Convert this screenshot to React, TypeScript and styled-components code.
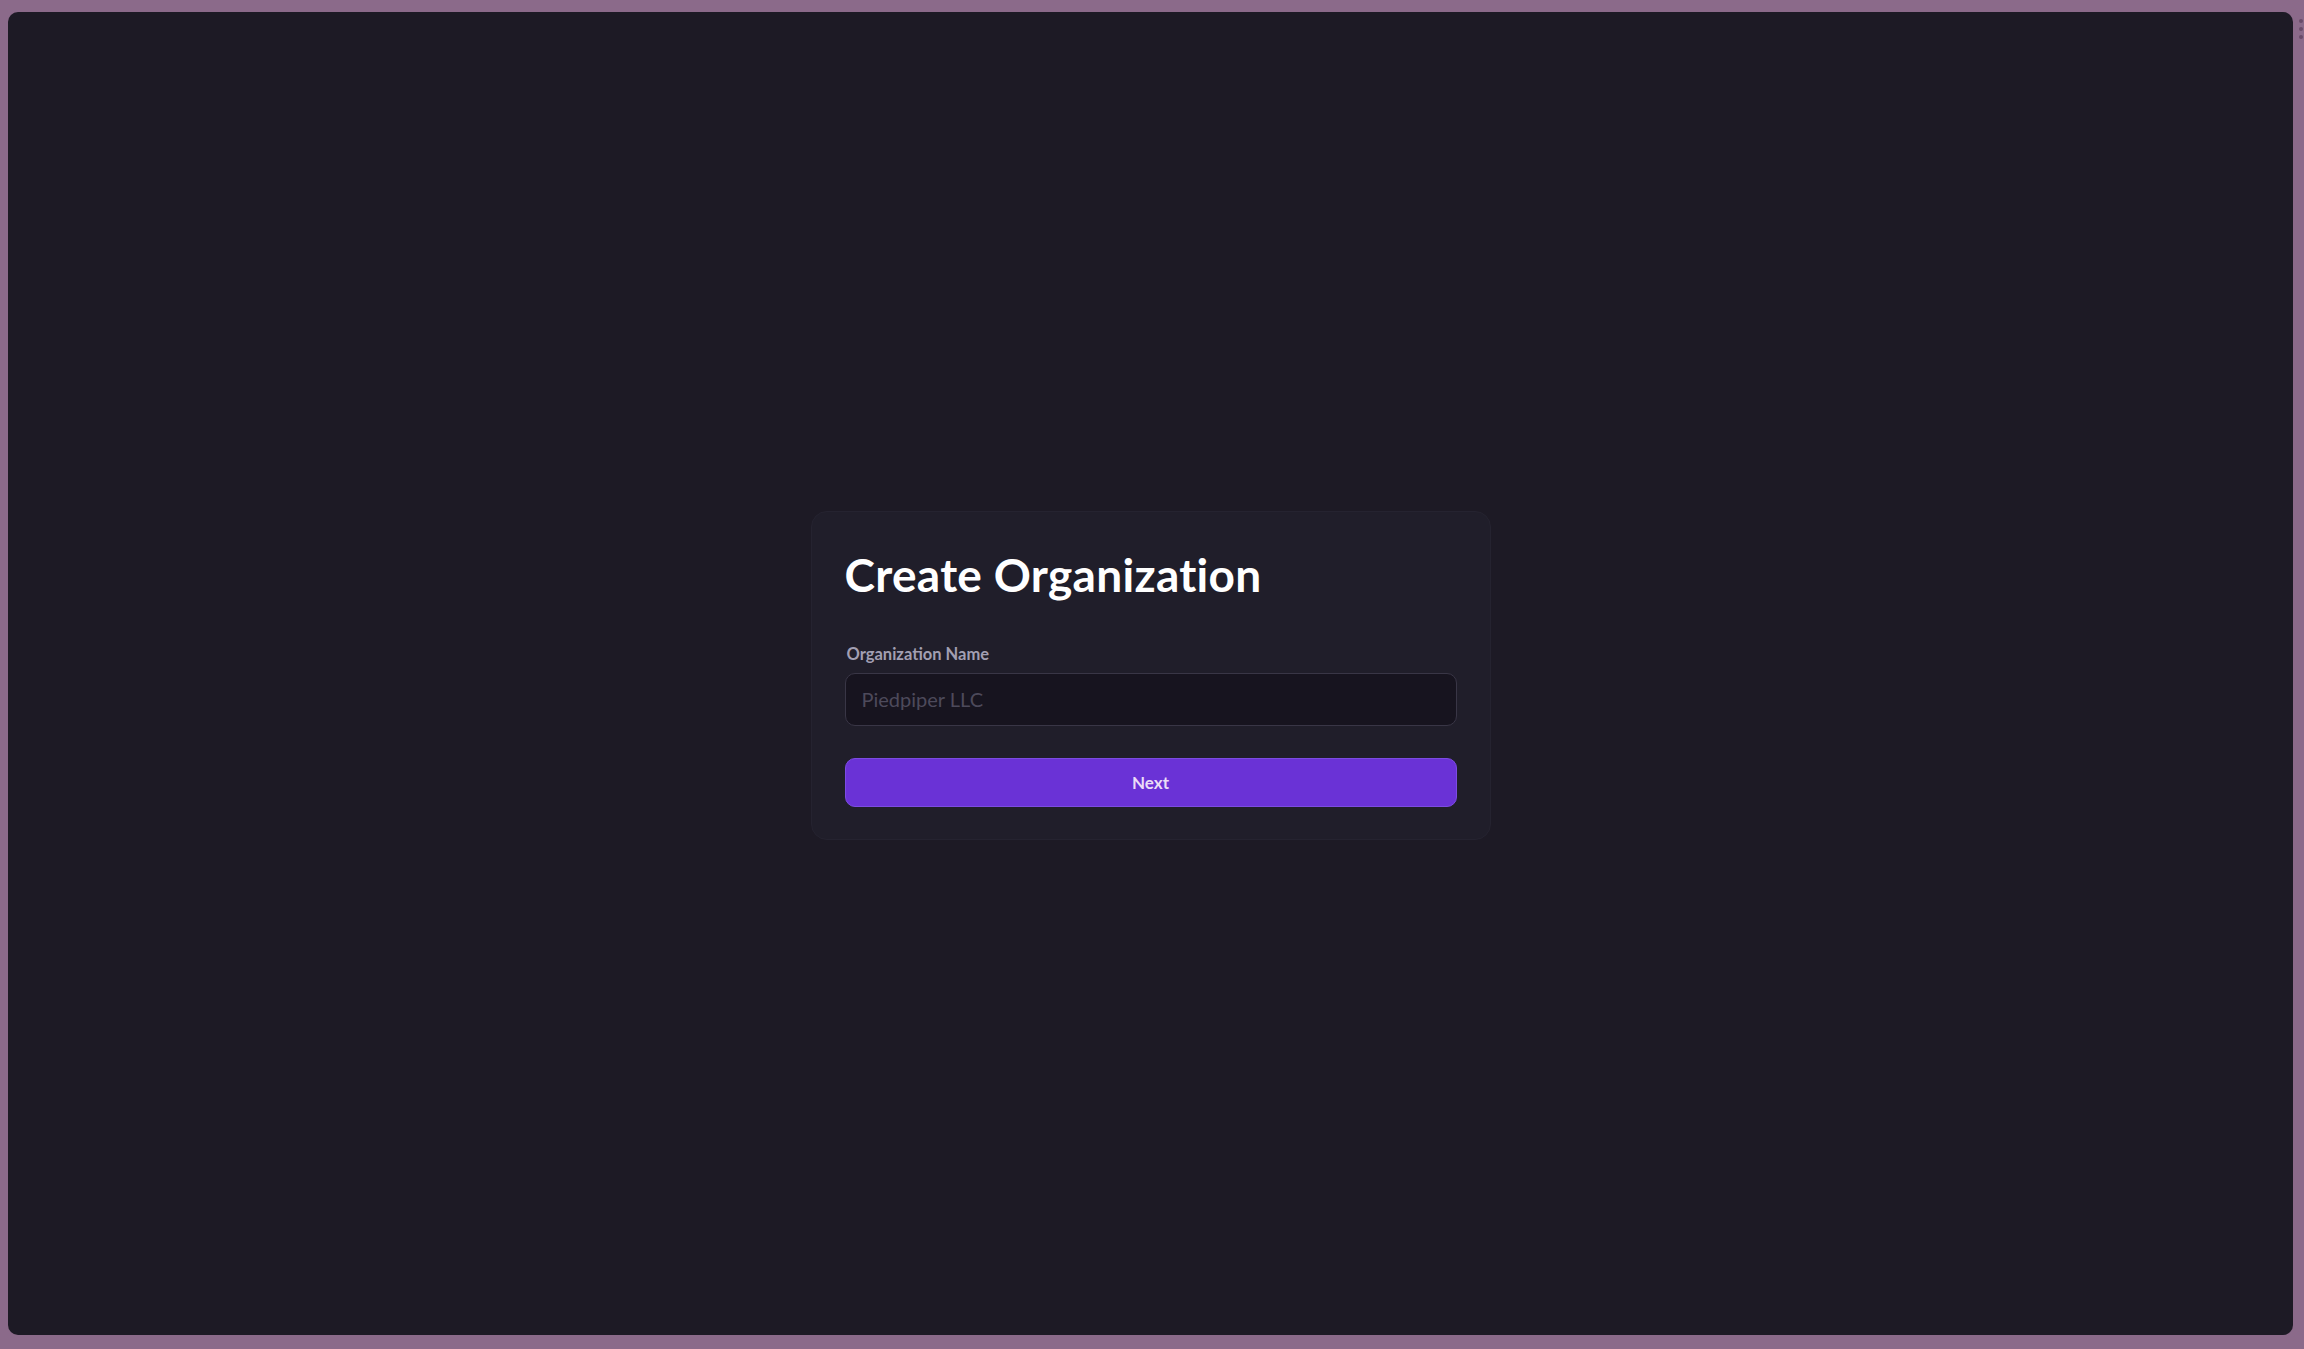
import styled, { createGlobalStyle } from "styled-components";

const GlobalStyle = createGlobalStyle`
  html, body {
    margin: 0;
    padding: 0;
    height: 100%;
  }
  body {
    font-family: Lato, "Open Sans", sans-serif;
    background: #8b6a8a;
  }
  #root {
    height: 100%;
  }
  * {
    box-sizing: border-box;
  }
`;

export default function App() {
  return (
    <>
      <GlobalStyle />
      <Frame>
        <WindowDots>
          <Dot />
          <Dot />
          <Dot />
        </WindowDots>
        <Page>
          <Card>
            <Title>Create Organization</Title>
            <Field>
              <Label htmlFor="org-name">Organization Name</Label>
              <Input id="org-name" placeholder="Piedpiper LLC" />
            </Field>
            <NextButton type="button">Next</NextButton>
          </Card>
        </Page>
      </Frame>
    </>
  );
}

const Frame = styled.div`
  position: relative;
  height: 100vh;
  display: flex;
  padding: 12px 11px 14px 8px;
  background: #8b6a8a;
`;

const WindowDots = styled.div`
  position: absolute;
  top: 19px;
  right: 1px;
  display: flex;
  flex-direction: column;
  gap: 4px;
`;

const Dot = styled.span`
  width: 4px;
  height: 4px;
  border-radius: 50%;
  background: #6a4b69;
`;

const Page = styled.main`
  flex: 1;
  display: flex;
  align-items: center;
  justify-content: center;
  border-radius: 10px;
  background: #1d1a25;
`;

const Card = styled.section`
  width: 680px;
  margin-top: 3px;
  padding: 34px 33px 32px;
  display: flex;
  flex-direction: column;
  border-radius: 16px;
  background: #201e2a;
  border: 1px solid #252330;
`;

const Title = styled.h1`
  margin: 0 0 40px;
  font-size: 46px;
  line-height: 58px;
  font-weight: 700;
  color: #ffffff;
  letter-spacing: 0.3px;
`;

const Field = styled.div`
  display: flex;
  flex-direction: column;
  gap: 9px;
  margin-bottom: 32px;
`;

const Label = styled.label`
  padding-left: 2px;
  font-size: 16.5px;
  line-height: 20px;
  font-weight: 700;
  color: #a29fb2;
`;

const Input = styled.input`
  height: 53px;
  padding: 0 16px;
  border-radius: 10px;
  border: 1px solid #393646;
  background: #17141f;
  color: #e6e4ee;
  font-family: Lato, sans-serif;
  font-size: 20px;
  outline: none;

  &::placeholder {
    color: #4d4a5b;
  }
`;

const NextButton = styled.button`
  height: 49px;
  border-radius: 10px;
  border: 1px solid #7c4be2;
  background: #6a32d6;
  color: #eadcf7;
  font-family: Lato, sans-serif;
  font-size: 17px;
  font-weight: 700;
  cursor: pointer;
`;
